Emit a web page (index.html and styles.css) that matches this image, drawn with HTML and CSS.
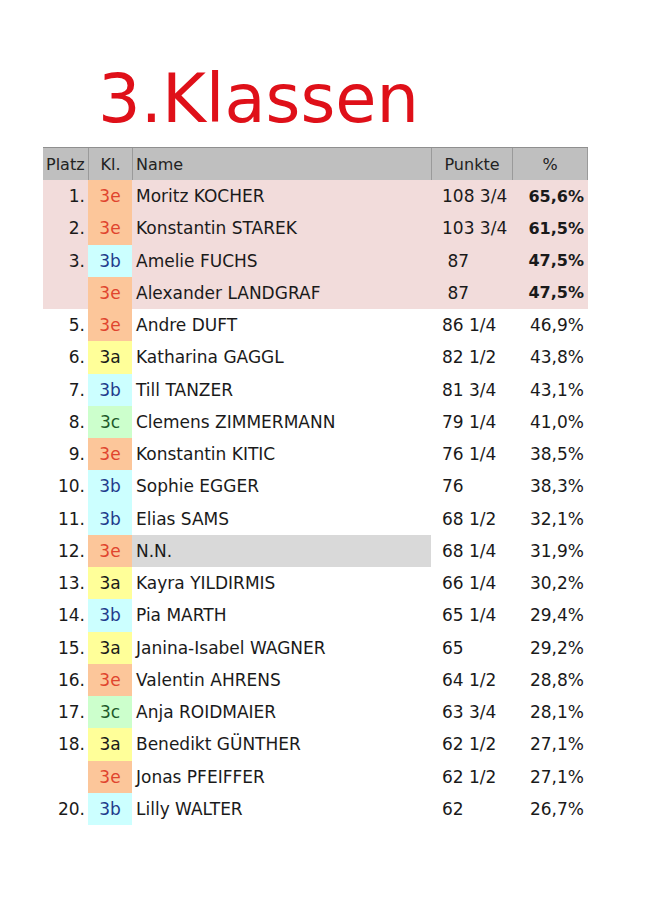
FILE: index.html
```html
<!DOCTYPE html>
<html lang="de">
<head>
<meta charset="utf-8">
<title>3.Klassen</title>
<link rel="stylesheet" href="styles.css">
</head>
<body>
<h1 class="title">3.Klassen</h1>
<div class="table">
  <div class="row head">
    <div class="c platz">Platz</div>
    <div class="c kl">Kl.</div>
    <div class="c name">Name</div>
    <div class="c pkt">Punkte</div>
    <div class="c pct">%</div>
  </div>
  <div class="row top">
    <div class="c platz">1.</div><div class="c kl k3e">3e</div><div class="c name">Moritz KOCHER</div><div class="c pkt">108 3/4</div><div class="c pct">65,6%</div>
  </div>
  <div class="row top">
    <div class="c platz">2.</div><div class="c kl k3e">3e</div><div class="c name">Konstantin STAREK</div><div class="c pkt">103 3/4</div><div class="c pct">61,5%</div>
  </div>
  <div class="row top">
    <div class="c platz">3.</div><div class="c kl k3b">3b</div><div class="c name">Amelie FUCHS</div><div class="c pkt">&nbsp;87</div><div class="c pct">47,5%</div>
  </div>
  <div class="row top">
    <div class="c platz"></div><div class="c kl k3e">3e</div><div class="c name">Alexander LANDGRAF</div><div class="c pkt">&nbsp;87</div><div class="c pct">47,5%</div>
  </div>
  <div class="row">
    <div class="c platz">5.</div><div class="c kl k3e">3e</div><div class="c name">Andre DUFT</div><div class="c pkt">86 1/4</div><div class="c pct">46,9%</div>
  </div>
  <div class="row">
    <div class="c platz">6.</div><div class="c kl k3a">3a</div><div class="c name">Katharina GAGGL</div><div class="c pkt">82 1/2</div><div class="c pct">43,8%</div>
  </div>
  <div class="row">
    <div class="c platz">7.</div><div class="c kl k3b">3b</div><div class="c name">Till TANZER</div><div class="c pkt">81 3/4</div><div class="c pct">43,1%</div>
  </div>
  <div class="row">
    <div class="c platz">8.</div><div class="c kl k3c">3c</div><div class="c name">Clemens ZIMMERMANN</div><div class="c pkt">79 1/4</div><div class="c pct">41,0%</div>
  </div>
  <div class="row">
    <div class="c platz">9.</div><div class="c kl k3e">3e</div><div class="c name">Konstantin KITIC</div><div class="c pkt">76 1/4</div><div class="c pct">38,5%</div>
  </div>
  <div class="row">
    <div class="c platz">10.</div><div class="c kl k3b">3b</div><div class="c name">Sophie EGGER</div><div class="c pkt">76</div><div class="c pct">38,3%</div>
  </div>
  <div class="row">
    <div class="c platz">11.</div><div class="c kl k3b">3b</div><div class="c name">Elias SAMS</div><div class="c pkt">68 1/2</div><div class="c pct">32,1%</div>
  </div>
  <div class="row">
    <div class="c platz">12.</div><div class="c kl k3e">3e</div><div class="c name nn">N.N.</div><div class="c pkt">68 1/4</div><div class="c pct">31,9%</div>
  </div>
  <div class="row">
    <div class="c platz">13.</div><div class="c kl k3a">3a</div><div class="c name">Kayra YILDIRMIS</div><div class="c pkt">66 1/4</div><div class="c pct">30,2%</div>
  </div>
  <div class="row">
    <div class="c platz">14.</div><div class="c kl k3b">3b</div><div class="c name">Pia MARTH</div><div class="c pkt">65 1/4</div><div class="c pct">29,4%</div>
  </div>
  <div class="row">
    <div class="c platz">15.</div><div class="c kl k3a">3a</div><div class="c name">Janina-Isabel WAGNER</div><div class="c pkt">65</div><div class="c pct">29,2%</div>
  </div>
  <div class="row">
    <div class="c platz">16.</div><div class="c kl k3e">3e</div><div class="c name">Valentin AHRENS</div><div class="c pkt">64 1/2</div><div class="c pct">28,8%</div>
  </div>
  <div class="row">
    <div class="c platz">17.</div><div class="c kl k3c">3c</div><div class="c name">Anja ROIDMAIER</div><div class="c pkt">63 3/4</div><div class="c pct">28,1%</div>
  </div>
  <div class="row">
    <div class="c platz">18.</div><div class="c kl k3a">3a</div><div class="c name">Benedikt GÜNTHER</div><div class="c pkt">62 1/2</div><div class="c pct">27,1%</div>
  </div>
  <div class="row">
    <div class="c platz"></div><div class="c kl k3e">3e</div><div class="c name">Jonas PFEIFFER</div><div class="c pkt">62 1/2</div><div class="c pct">27,1%</div>
  </div>
  <div class="row">
    <div class="c platz">20.</div><div class="c kl k3b">3b</div><div class="c name">Lilly WALTER</div><div class="c pkt">62</div><div class="c pct">26,7%</div>
  </div>
</div>
</body>
</html>
```
FILE: styles.css
```css
html, body {
  margin: 0;
  padding: 0;
  background: #ffffff;
}
body {
  font-family: "DejaVu Sans", "Liberation Sans", sans-serif;
  color: #1a1a1a;
  width: 648px;
  height: 908px;
  overflow: hidden;
}
.title {
  margin: 0;
  padding: 59px 0 0 98px;
  height: 147px;
  box-sizing: border-box;
  font-weight: normal;
  font-size: 67px;
  line-height: 80px;
  color: #df1019;
  letter-spacing: 0;
}
.table {
  margin-left: 43px;
  width: 545px;
}
.row {
  display: grid;
  grid-template-columns: 45px 44px 299px 81px 76px;
  height: 32.25px;
  align-items: stretch;
  font-size: 17px;
}
.c {
  display: flex;
  align-items: center;
  white-space: nowrap;
  overflow: hidden;
}
.head {
  height: 33px;
  font-size: 16px;
  background: #bfbfbf;
  border-top: 1px solid #8f8f8f;
  box-sizing: border-box;
}
.head .c {
  border-left: 1px solid #9a9a9a;
  color: #222;
}
.head .c:first-child { border-left: none; justify-content: flex-start; padding: 0 0 0 3px; }
.head .kl { justify-content: center; }
.head .name { padding-left: 3px; }
.head .pkt { justify-content: center; padding-left: 0; }
.head .pct { justify-content: center; padding-right: 0; border-right: 1px solid #9a9a9a; }
.platz {
  justify-content: flex-end;
  padding-right: 3px;
}
.kl {
  justify-content: center;
}
.name {
  padding-left: 4px;
}
.pkt {
  padding-left: 11px;
}
.pct {
  justify-content: flex-end;
  padding-right: 4px;
}
.top {
  background: #f2dcdb;
}
.top .pct {
  font-weight: bold;
  font-size: 16px;
}
.nn {
  background: #d9d9d9;
}
.k3e { background: #fcc69a; color: #e0442e; }
.k3b { background: #ccffff; color: #1f3c8c; }
.k3a { background: #ffff99; color: #1a1a1a; }
.k3c { background: #ccffcc; color: #1d5a2a; }
```
